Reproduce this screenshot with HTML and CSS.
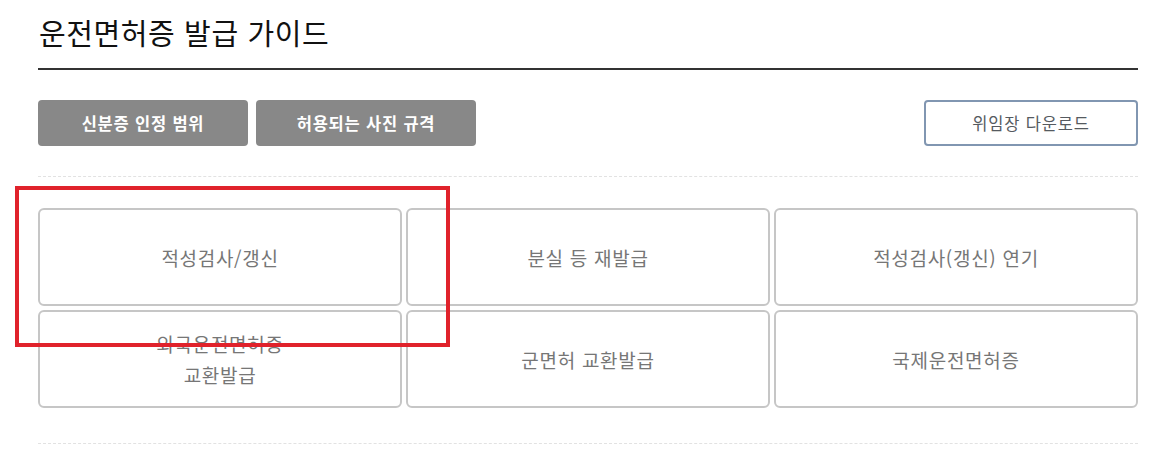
FILE: index.html
```html
<!DOCTYPE html>
<html lang="ko">
<head>
<meta charset="utf-8">
<title>운전면허증 발급 가이드</title>
<link rel="stylesheet" href="styles.css">
</head>
<body>
<div class="page">
  <div class="header">
    <h1 class="title">운전면허증 발급 가이드</h1>
  </div>
  <div class="btn-row">
    <div class="btn-group">
      <a class="btn btn-gray btn-id">신분증 인정 범위</a>
      <a class="btn btn-gray btn-photo">허용되는 사진 규격</a>
    </div>
    <a class="btn btn-outline">위임장 다운로드</a>
  </div>
  <div class="sep"></div>
  <div class="grid">
    <a class="card">적성검사/갱신</a>
    <a class="card">분실 등 재발급</a>
    <a class="card">적성검사(갱신) 연기</a>
    <a class="card">외국운전면허증<br>교환발급</a>
    <a class="card">군면허 교환발급</a>
    <a class="card">국제운전면허증</a>
  </div>
  <div class="sep sep-bottom"></div>
  <div class="highlight"></div>
</div>
</body>
</html>
```

FILE: styles.css
```css
html, body {
  margin: 0;
  padding: 0;
  background: #ffffff;
}

body {
  font-family: "Noto Sans CJK KR", "Noto Sans", sans-serif;
  color: #111;
}

.page {
  position: relative;
  width: 1100px;
  margin-left: 38px;
}

.header {
  padding-top: 12px;
  padding-bottom: 16px;
  border-bottom: 2px solid #333333;
}

.title {
  margin: 0;
  padding-left: 1px;
  font-size: 29px;
  font-weight: 400;
  line-height: 40px;
  color: #111111;
  letter-spacing: 0.6px;
}

.btn-row {
  margin-top: 30px;
  display: flex;
  justify-content: space-between;
  align-items: center;
}

.btn-group {
  display: flex;
  gap: 8px;
}

.btn {
  display: flex;
  align-items: center;
  justify-content: center;
  height: 46px;
  box-sizing: border-box;
  border-radius: 4px;
  font-size: 16.5px;
  letter-spacing: 0.8px;
  text-decoration: none;
  cursor: pointer;
}

.btn-gray {
  background: #888888;
  color: #ffffff;
  font-weight: 700;
}

.btn-id {
  width: 210px;
}

.btn-photo {
  width: 220px;
}

.btn-outline {
  width: 214px;
  background: #ffffff;
  border: 2px solid #8196b1;
  color: #555a60;
  height: 46px;
}

.sep {
  margin-top: 30px;
  border-top: 1px dashed #e2e2e2;
}

.grid {
  margin-top: 31px;
  display: grid;
  grid-template-columns: repeat(3, 1fr);
  grid-auto-rows: 98px;
  gap: 4px 4px;
}

.card {
  display: flex;
  align-items: center;
  justify-content: center;
  text-align: center;
  box-sizing: border-box;
  border: 2px solid #c6c6c6;
  border-radius: 6px;
  font-size: 19px;
  letter-spacing: 0.7px;
  line-height: 31px;
  color: #767676;
  text-decoration: none;
}

.sep-bottom {
  margin-top: 35px;
}

.highlight {
  position: absolute;
  left: -23px;
  top: 186px;
  width: 435px;
  height: 161px;
  box-sizing: border-box;
  border: 4px solid #e0222b;
  pointer-events: none;
}
```
